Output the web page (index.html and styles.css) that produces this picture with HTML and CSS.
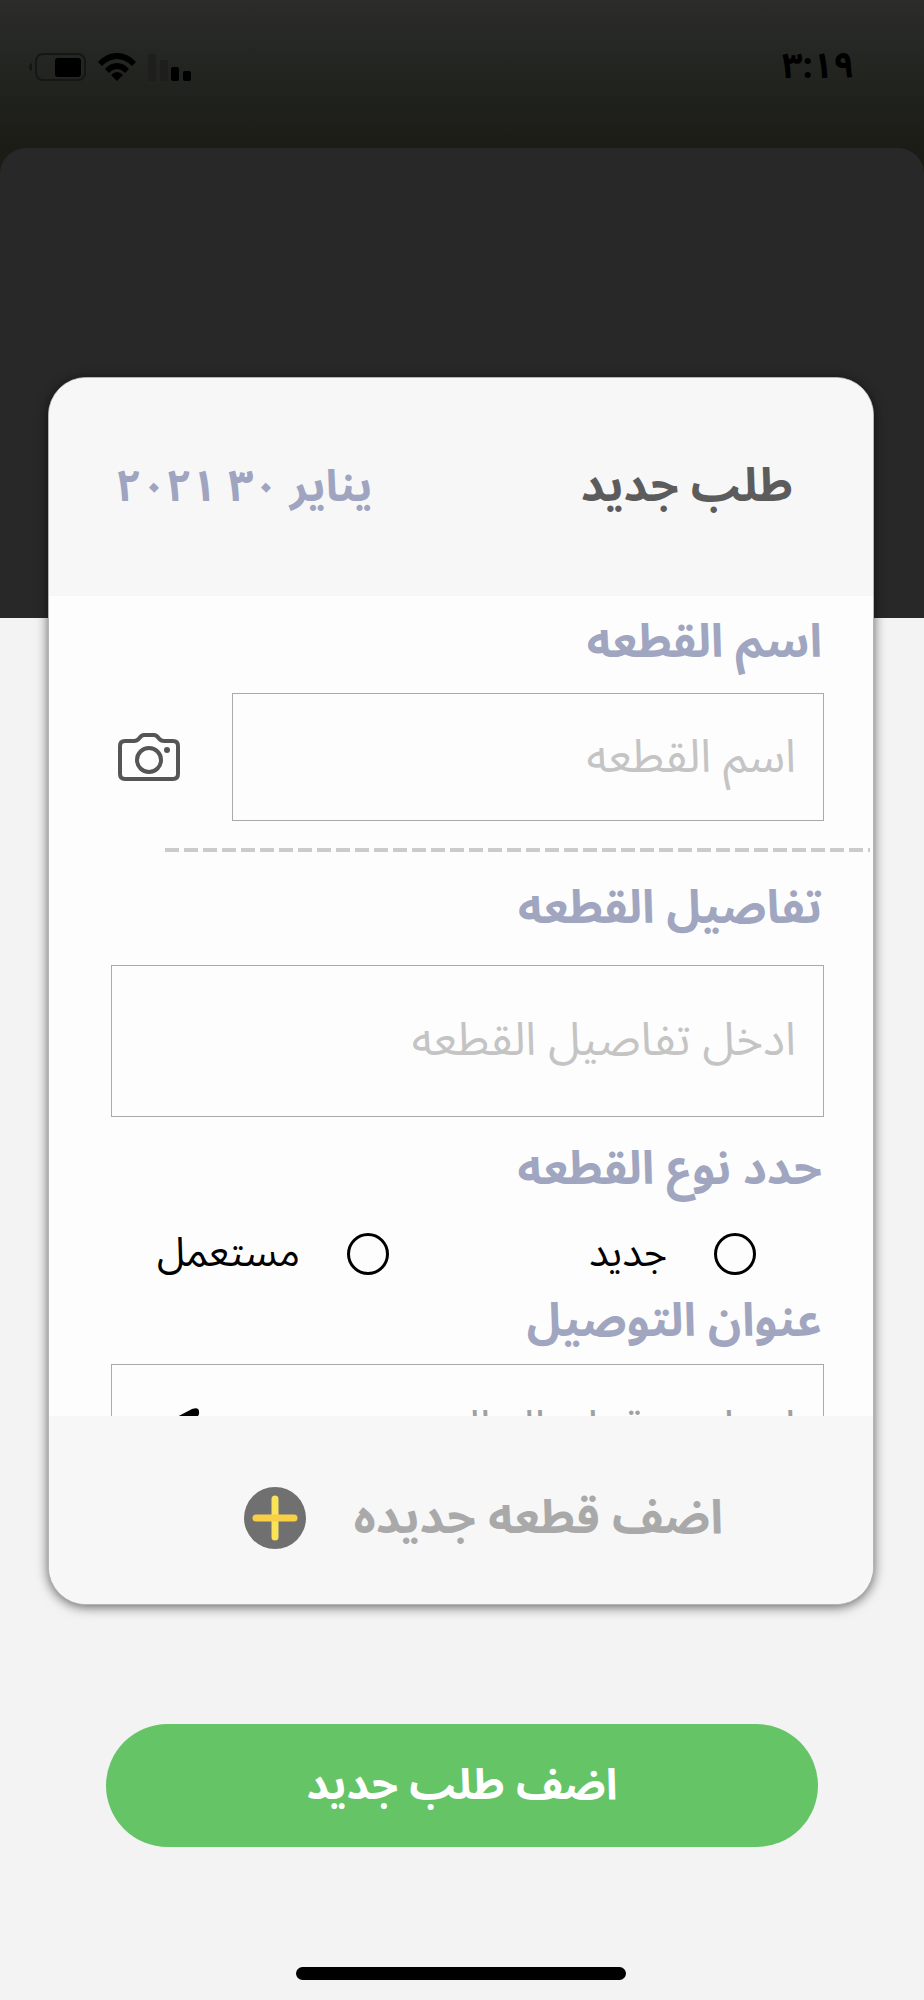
FILE: index.html
```html
<!DOCTYPE html>
<html lang="ar" dir="rtl">
<head>
<meta charset="utf-8">
<meta name="viewport" content="width=device-width, initial-scale=1">
<title>طلب جديد</title>
<link rel="stylesheet" href="styles.css">
</head>
<body>
<div class="screen">
  <header class="backdrop">
    <div class="status-bar">
      <time class="clock">٣:١٩</time>
      <div class="status-icons">
        <svg class="signal" viewBox="0 0 44 28" aria-hidden="true">
          <rect class="faint" x="0" y="1" width="8" height="27" rx="2"/>
          <rect class="faint" x="12" y="7" width="8" height="21" rx="2"/>
          <rect x="23" y="14" width="8" height="14" rx="2"/>
          <rect x="35" y="18" width="8" height="10" rx="2"/>
        </svg>
        <svg class="wifi" viewBox="0 0 38 28" aria-hidden="true">
          <path d="M0 9 Q8 0 19 0 T38 9 L34 13 Q27 6 19 6 T4 13Z"/>
          <path d="M7 16 Q12 10 19 10 T31 16 L27 20 Q23 16 19 16 T11 20Z"/>
          <path d="M13 22 Q16 19 19 19 T25 22 L19 28Z"/>
        </svg>
        <svg class="battery" viewBox="0 0 57 28" aria-hidden="true">
          <path class="dim" d="M3 10 V18 Q0 17 0 14 T3 10Z"/>
          <rect class="shell" x="7" y="1" width="49" height="26" rx="7"/>
          <rect x="26" y="5" width="26" height="19" rx="3"/>
        </svg>
      </div>
    </div>
    <div class="sheet"></div>
  </header>

  <main class="content">
    <form class="card">
      <div class="card-header">
        <h1 class="card-title">طلب جديد</h1>
        <time class="card-date" datetime="2021-01-30">يناير ٣٠ ٢٠٢١</time>
      </div>

      <div class="card-body">
        <label class="field-label" for="part-name">اسم القطعه</label>
        <div class="name-row">
          <input class="field name-field" id="part-name" type="text" placeholder="اسم القطعه">
          <button class="icon-button" type="button" aria-label="صوره">
            <svg class="camera" viewBox="0 0 62 48" aria-hidden="true">
              <path d="M7 8 H16 Q19 8 21 5.500 Q23.500 2 26 2 H36 Q38.500 2 41 5.500 Q43 8 46 8 H55 Q60 8 60 13 V41 Q60 46 55 46 H7 Q2 46 2 41 V13 Q2 8 7 8Z"/>
              <circle cx="31" cy="27" r="12"/>
              <circle class="dot" cx="49" cy="17" r="3"/>
            </svg>
          </button>
        </div>
        <svg class="divider" aria-hidden="true"><line x1="0" y1="2" x2="100%" y2="2"/></svg>

        <label class="field-label details-label" for="part-details">تفاصيل القطعه</label>
        <textarea class="field details-field" id="part-details" rows="1" placeholder="ادخل تفاصيل القطعه"></textarea>

        <fieldset class="type-group">
          <legend class="field-label type-label">حدد نوع القطعه</legend>
          <div class="options">
            <label class="option"><input class="radio" type="radio" name="type">جديد</label>
            <label class="option"><input class="radio" type="radio" name="type">مستعمل</label>
          </div>
        </fieldset>

        <label class="field-label address-label" for="address">عنوان التوصيل</label>
        <div class="address-row">
          <input class="field address-field" id="address" type="text" placeholder="ادخل موقعك الحالي">
          <button class="locate" type="button" aria-label="موقعك الحالي">
            <svg class="arrow" viewBox="0 0 48 48" aria-hidden="true"><path d="M3 20 L39 1 Q47 -2 46 6 L28 45 Q24 51 22 44 V26 H4 Q-3 24 3 20Z"/></svg>
          </button>
        </div>
      </div>

      <div class="card-footer">
        <button class="add-part" type="button">
          <span>اضف قطعه جديده</span>
          <svg class="plus" viewBox="0 0 62 62" aria-hidden="true">
            <circle cx="31" cy="31" r="31"/>
            <path class="plus-v" d="M31 12 V50"/>
            <path class="plus-h" d="M12 31 H50"/>
          </svg>
        </button>
      </div>
    </form>

    <button class="submit" type="button">اضف طلب جديد</button>
    <div class="home-indicator"></div>
  </main>
</div>
</body>
</html>
```
FILE: styles.css
```css
* { box-sizing: border-box; }

body {
  margin: 0;
  background: #f3f3f3;
  color: #000;
  font-family: "Noto Sans Arabic", "DejaVu Sans", sans-serif;
}

button, input, textarea { font: inherit; }

button {
  padding: 0;
  border: 0;
  background: none;
  cursor: pointer;
}

svg { display: block; }

.screen {
  display: flex;
  flex-direction: column;
  min-height: 100vh;
}

.backdrop {
  background: linear-gradient(#2c2c2b, #262825 40px, #1b1c16 148px);
}

.status-bar {
  display: flex;
  justify-content: space-between;
  align-items: center;
  height: 148px;
  padding: 0 70px 14px 29px;
}

.clock {
  font-size: 36px;
  font-weight: 700;
}

.status-icons {
  display: flex;
  gap: 12px;
}

.signal { width: 44px; height: 28px; }
.wifi { width: 38px; height: 28px; }
.battery { width: 57px; height: 28px; }
.faint { fill: #1e1f1d; }
.dim { fill: #161715; }
.shell { fill: none; stroke: #161715; stroke-width: 2; }

.sheet {
  height: 470px;
  border-radius: 26px 26px 0 0;
  background: #282828;
}

.content {
  display: flex;
  flex: 1;
  flex-direction: column;
  margin-top: -241px;
  padding: 0 50px 20px 48px;
}

.card {
  position: relative;
  overflow: hidden;
  border: 1px solid #b4b4b4;
  border-radius: 38px;
  background: #fdfdfd;
  box-shadow: 0 2px 12px rgba(0, 0, 0, 0.6);
}

.card-header {
  display: flex;
  justify-content: space-between;
  align-items: center;
  height: 218px;
  padding: 0 80px 0 67px;
  background: #f7f7f7;
}

.card-title {
  margin: 0;
  color: #5c5c5c;
  font-size: 46px;
  line-height: 80px;
}

.card-date {
  color: #9fa4c1;
  font-size: 44px;
  font-weight: 700;
  line-height: 80px;
}

.card-body {
  height: 820px;
  overflow: hidden;
  padding: 15px 49px 0 62px;
}

.field-label {
  display: block;
  padding-right: 2px;
  color: #a0a5c0;
  font-size: 46px;
  font-weight: 700;
  line-height: 64px;
}

.name-row {
  display: flex;
  align-items: center;
  gap: 52px;
  margin-top: 18px;
  padding-left: 7px;
}

.field {
  display: block;
  width: 100%;
  padding: 0 27px;
  border: 1px solid #a9a9a9;
  border-radius: 0;
  background: #fdfdfd;
  font-size: 46px;
  line-height: 64px;
  outline: 0;
}

.field::placeholder { color: #c4c4c4; opacity: 1; }

.name-field {
  flex: 1;
  min-width: 0;
  height: 128px;
}

.camera {
  width: 62px;
  height: 48px;
  fill: none;
  stroke: #555;
  stroke-width: 4;
}

.camera .dot { fill: #555; stroke: none; }

.divider {
  width: calc(100% - 8px);
  height: 4px;
  margin: 27px -46px 0 0;
  stroke: #cbcbcb;
  stroke-width: 4;
  stroke-dasharray: 14 5;
}

.details-label { margin-top: 25px; }

.details-field {
  height: 152px;
  margin-top: 24px;
  padding-top: 43px;
  overflow: hidden;
  resize: none;
}

.type-group {
  margin: 0;
  padding: 0;
  border: 0;
}

.type-label { padding: 21px 2px 0 0; }

.options {
  display: grid;
  grid-template-columns: 367px 1fr;
  padding: 30px 68px 0 0;
}

.option {
  display: flex;
  align-items: center;
  gap: 47px;
  font-size: 40px;
  line-height: 44px;
}

.radio {
  width: 42px;
  height: 42px;
  margin: 0;
  border: 3px solid #000;
  border-radius: 50%;
  appearance: none;
}

.radio:checked { background: #000; }

.address-label { margin-top: 14px; }

.address-row {
  position: relative;
  margin-top: 10px;
}

.address-field { height: 128px; }
.address-field::placeholder { color: #a0a0a0; }

.locate {
  position: absolute;
  bottom: 36px;
  left: 42px;
}

.arrow { width: 48px; height: 48px; }

.card-footer {
  display: flex;
  align-items: center;
  height: 188px;
  padding: 16px 150px 0 0;
  background: #f7f7f7;
}

.add-part {
  display: flex;
  align-items: center;
  gap: 48px;
  color: #a9a9a9;
  font-size: 47px;
  font-weight: 700;
}

.plus {
  width: 62px;
  height: 62px;
  fill: #707070;
  stroke-width: 7;
  stroke-linecap: round;
}

.plus-v { stroke: #fae359; }
.plus-h { stroke: #f8cf46; }

.submit {
  height: 123px;
  margin: 119px 56px 0 58px;
  border-radius: 62px;
  background: #65c466;
  color: #fff;
  font-size: 43px;
  font-weight: 700;
}

.home-indicator {
  width: 40%;
  height: 13px;
  margin: auto auto 0;
  border-radius: 7px;
  background: #000;
}
```
